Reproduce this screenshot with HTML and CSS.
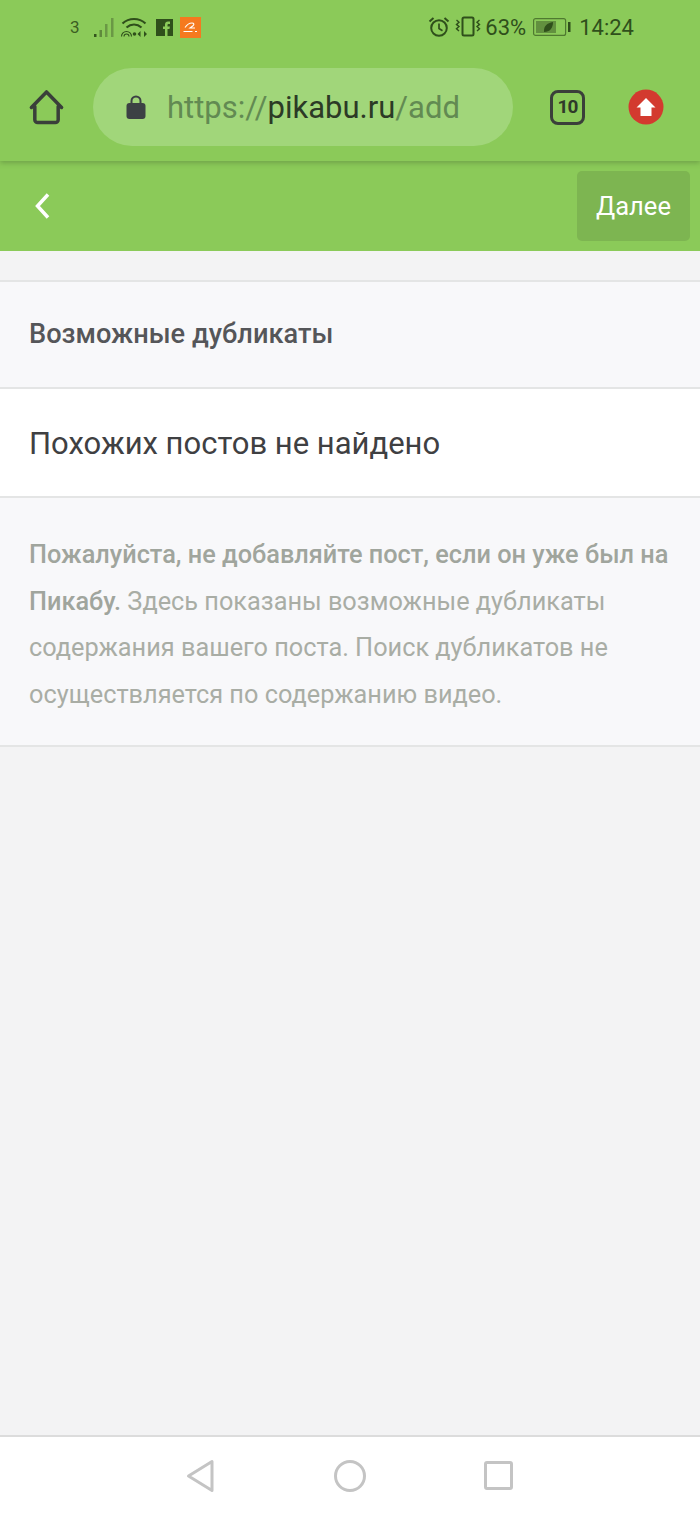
FILE: index.html
```html
<!DOCTYPE html>
<html lang="ru">
<head>
  <meta charset="UTF-8" />
  <meta name="viewport" content="width=device-width, initial-scale=1.0"/>
  <title>Пикабу</title>
  <link rel="stylesheet" href="styles.css">
</head>
<body>
  <div class="phone">
    <!-- Android status bar -->
    <div class="status-bar">
      <div class="status-left">
        <span class="sim">3</span>
        <svg class="ic-signal" width="22" height="22" viewBox="0 0 22 22">
          <rect x="0" y="18" width="2.500" height="3" fill="#34551d"/>
          <rect x="5.500" y="14" width="2.500" height="7" fill="#5f8a3c"/>
          <rect x="11" y="8" width="2.500" height="13" fill="#6a9845"/>
          <rect x="17" y="2" width="2.500" height="19" fill="#6a9845"/>
        </svg>
        <svg class="ic-wifi" width="28" height="22" viewBox="0 0 28 22" fill="none" stroke="#2f4f1b" stroke-width="2.200">
          <path d="M2.500 7.500C9 1.500 19 1.500 25.500 7.500"/>
          <path d="M6.500 11.500C11 7.500 17 7.500 21.500 11.500"/>
          <path d="M1.500 20.500a5 5 0 0 1 10 0" stroke-width="1.100"/>
          <path d="M4 20.500a2.500 2.500 0 0 1 5 0" stroke-width="1.100"/>
          <circle cx="14.500" cy="18" r="1.800" fill="#2f4f1b" stroke="none"/>
          <path d="M17.500 18l3-3v6zM27 18l-3-3v6z" fill="#2f4f1b" stroke="none"/>
        </svg>
        <svg class="ic-fb" width="17" height="17" viewBox="0 0 17 17">
          <rect width="17" height="17" fill="#2f4f1b"/>
          <path d="M9 17v-7H7V7.500h2V5.500C9 3.500 10.200 2.500 12 2.500h2V5h-1.300c-.9 0-1.200.4-1.200 1.100v1.400h2.400L13.500 10h-2v7z" fill="#8bca59"/>
        </svg>
        <span class="ic-ali">
          <svg width="21" height="21" viewBox="0 0 21 21" fill="none" stroke="#fff">
            <path d="M5 10.500c2-3 4-4.500 7-4.500 2 0 2.500 1.500 1 2.800l-3 2.200h5" stroke-width="1.100"/>
            <path d="M3.500 14.500h9M15 14.500h2" stroke-width="1"/>
          </svg>
        </span>
      </div>
      <div class="status-right">
        <svg width="22" height="22" viewBox="0 0 22 22" fill="none" stroke="#2f4f1b" stroke-width="2">
          <circle cx="11" cy="12" r="7.800"/>
          <path d="M11 7.500V12.500l3.500 2.200" stroke-width="1.700"/>
          <path d="M1.500 5.500l4-3.500M20.500 5.500l-4-3.500"/>
        </svg>
        <svg class="ic-vibrate" width="26" height="22" viewBox="0 0 26 22" fill="none" stroke="#2f4f1b">
          <rect x="7.500" y="1.500" width="11" height="18" rx="1.500" stroke-width="2"/>
          <path d="M1.500 4l2.500 2.200-2.500 2.200 2.500 2.200-2.500 2.200 2.500 2.200M24.500 4L22 6.200l2.500 2.200-2.500 2.200 2.500 2.200-2.500 2.200" stroke-width="1.400"/>
        </svg>
        <span class="battery-pct">63%</span>
        <svg class="ic-battery" width="38" height="18" viewBox="0 0 38 18">
          <rect x="0.600" y="0.600" width="32" height="16.800" rx="2" fill="none" stroke="#4f7a30" stroke-width="1.200"/>
          <rect x="3" y="3" width="20" height="12" fill="#62903f"/>
          <path d="M11 14c-.5-6 3-9 9-10 0 6-3 10-9 10z" fill="#2f4f1b"/>
          <rect x="35" y="4" width="2.500" height="10" fill="#2f4f1b"/>
        </svg>
        <span class="clock">14:24</span>
      </div>
    </div>

    <!-- browser toolbar -->
    <div class="browser-bar">
      <svg class="ic-home" width="37" height="38" viewBox="0 0 38 38" fill="none" stroke="#3a3f3a" stroke-width="3.600" stroke-linejoin="round" stroke-linecap="round">
        <path d="M3.500 19.500L19 3.500l15.500 16"/>
        <path d="M7 18.500v13.500a3 3 0 0 0 3 3h18a3 3 0 0 0 3-3V18.500"/>
      </svg>
      <div class="url-pill">
        <svg class="ic-lock" width="20" height="26" viewBox="0 0 20 26">
          <path d="M5.500 11V7a4.500 4.500 0 0 1 9 0v4" fill="none" stroke="#3c4144" stroke-width="2"/>
          <rect x="0.500" y="9" width="19" height="16" rx="3" fill="#3c4144"/>
        </svg>
        <span class="url"><span class="url-dim">https://</span>pikabu.ru<span class="url-dim">/add</span></span>
      </div>
      <span class="tab-count">10</span>
      <svg class="ic-upload" width="36" height="36" viewBox="0 0 36 36">
        <circle cx="18" cy="18" r="17.500" fill="#d33a2f"/>
        <path d="M18 9L27.500 18.500H23.500V27H12.500V18.500H8.500z" fill="#fff"/>
      </svg>
    </div>

    <!-- page header -->
    <header class="page-header">
      <svg class="ic-back" width="18" height="28" viewBox="0 0 18 28" fill="none" stroke="#fff" stroke-width="3.500">
        <path d="M15 2.500L4.500 14 15 25.500"/>
      </svg>
      <button class="next-btn">Далее</button>
    </header>

    <main class="content">
      <section class="block block-title">Возможные дубликаты</section>
      <section class="block block-result">Похожих постов не найдено</section>
      <section class="block block-note">
        <b>Пожалуйста, не добавляйте пост, если он уже был на Пикабу.</b>
        Здесь показаны возможные дубликаты содержания вашего поста. Поиск дубликатов не осуществляется по содержанию видео.
      </section>
    </main>

    <!-- android nav -->
    <nav class="nav-bar">
      <svg class="nav-back" width="28" height="34" viewBox="0 0 28 34" fill="none" stroke="#c4c4c4" stroke-width="3" stroke-linejoin="round">
        <path d="M26 2.500v29L2.500 17z"/>
      </svg>
      <svg class="nav-home" width="32" height="32" viewBox="0 0 32 32" fill="none" stroke="#c4c4c4" stroke-width="3">
        <circle cx="16" cy="16" r="14.500"/>
      </svg>
      <svg class="nav-recent" width="29" height="29" viewBox="0 0 29 29" fill="none" stroke="#c4c4c4" stroke-width="3" stroke-linejoin="round">
        <rect x="1.500" y="1.500" width="26" height="26" rx="1.500"/>
      </svg>
    </nav>
  </div>
</body>
</html>
```

FILE: styles.css
```css
* {
  box-sizing: border-box;
}

body {
  margin: 0;
  padding: 0;
  background: #f3f3f4;
  font-family: Roboto, "Noto Sans", sans-serif;
}

.phone {
  width: 700px;
  height: 1517px;
  display: flex;
  flex-direction: column;
  overflow: hidden;
}

/* Status bar */
.status-bar {
  height: 54px;
  background: #8bca59;
  display: flex;
  justify-content: space-between;
  align-items: center;
  padding: 0 66px 0 70px;
  color: #2f4f1b;
  position: relative;
  z-index: 2;
}

.status-left,
.status-right {
  display: flex;
  align-items: center;
}

.sim {
  font-size: 17px;
  width: 24px;
  color: #3b5f22;
}

.ic-wifi {
  margin-left: 4px;
}

.ic-fb {
  margin-left: 8px;
  margin-top: 1px;
}

.ic-ali {
  width: 21px;
  height: 21px;
  margin-left: 7px;
  background: #f5791f;
  display: flex;
}

.ic-vibrate {
  margin-left: 5px;
}

.battery-pct {
  font-size: 22px;
  margin-left: 4px;
}

.ic-battery {
  margin-left: 7px;
}

.clock {
  font-size: 22px;
  margin-left: 8px;
}

/* Browser toolbar */
.browser-bar {
  height: 107px;
  background: #8bca59;
  display: flex;
  align-items: center;
  padding: 0 0 1px 28px;
  position: relative;
  z-index: 1;
  box-shadow: 0 2px 5px rgba(60, 90, 40, 0.35);
}

.ic-home {
  flex-shrink: 0;
}

.url-pill {
  width: 420px;
  height: 78px;
  margin-left: 28px;
  border-radius: 39px;
  background: #a1d67a;
  display: flex;
  align-items: center;
  padding-left: 33px;
}

.ic-lock {
  flex-shrink: 0;
}

.url {
  font-size: 31px;
  margin-left: 21px;
  color: #2c3a26;
  white-space: nowrap;
}

.url-dim {
  color: #628a52;
}

.tab-count {
  width: 35px;
  height: 35px;
  margin-left: 37px;
  border: 3.5px solid #3a3f3a;
  border-radius: 8px;
  color: #2f3a2a;
  font-size: 19px;
  font-weight: 700;
  letter-spacing: -1px;
  text-align: center;
  line-height: 28px;
}

.ic-upload {
  margin-left: 43px;
}

/* Page header */
.page-header {
  height: 90px;
  background: #8bca59;
  display: flex;
  justify-content: space-between;
  align-items: center;
  padding: 0 10px 0 33px;
}

.next-btn {
  width: 113px;
  height: 70px;
  border: none;
  border-radius: 5px;
  background: #7db551;
  color: #fff;
  font-family: Roboto, "Noto Sans", sans-serif;
  font-size: 25.500px;
}

/* Content blocks */
.content {
  flex: 1;
  padding-top: 29px;
}

.block {
  padding: 0 29px;
  border-bottom: 2px solid #e4e5e5;
}

.block-title {
  height: 109px;
  background: #f8f8fa;
  border-top: 2px solid #e4e5e5;
  color: #555659;
  font-size: 27.200px;
  font-weight: 500;
  line-height: 105px;
}

.block-result {
  height: 109px;
  background: #fff;
  color: #3f4042;
  font-size: 31px;
  line-height: 109px;
}

.block-note {
  height: 249px;
  padding-top: 34px;
  background: #f8f8fa;
  color: #a9ada5;
  font-size: 25.300px;
  line-height: 46.700px;
}

.block-note b {
  font-weight: 500;
  color: #a0a59d;
}

/* Android nav */
.nav-bar {
  height: 82px;
  background: #fff;
  border-top: 2px solid #dcdcdc;
  display: flex;
  align-items: center;
  justify-content: center;
  padding: 0 2px 3px 0;
}

.nav-home {
  margin-left: 120px;
}

.nav-recent {
  margin-left: 118px;
}
```
